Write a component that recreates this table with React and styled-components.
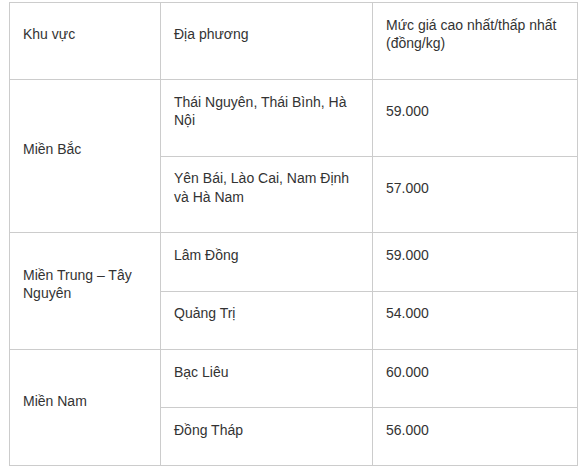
import React from "react";
import styled, { createGlobalStyle } from "styled-components";

const Global = createGlobalStyle`
  html, body { margin: 0; padding: 0; background: #fff; }
  body { font-family: "Liberation Sans", Arial, sans-serif; }
`;

const Table = styled.table`
  margin: 2px 0 0 9px;
  width: 568px;
  border-collapse: collapse;
  table-layout: fixed;
  font-size: 14px;
  line-height: 18.5px;
  color: #333;
`;

const Col = styled.col`
  width: ${(p) => p.$w}px;
`;

const Cell = styled.td`
  border: 1px solid #ccc;
  padding: 12.75px 13px 26px;
  vertical-align: middle;
  text-align: left;
  font-weight: normal;
`;

const rows = [
  { region: "Miền Bắc", span: 2, place: "Thái Nguyên, Thái Bình, Hà Nội", price: "59.000" },
  { place: "Yên Bái, Lào Cai, Nam Định và Hà Nam", price: "57.000" },
  { region: "Miền Trung – Tây Nguyên", span: 2, place: "Lâm Đồng", price: "59.000" },
  { place: "Quảng Trị", price: "54.000" },
  { region: "Miền Nam", span: 2, place: "Bạc Liêu", price: "60.000" },
  { place: "Đồng Tháp", price: "56.000" },
];

export default function App() {
  return (
    <>
      <Global />
      <Table>
        <colgroup>
          <Col $w={151} />
          <Col $w={212} />
          <Col $w={205} />
        </colgroup>
        <tbody>
          <tr>
            <Cell>Khu vực</Cell>
            <Cell>Địa phương</Cell>
            <Cell>Mức giá cao nhất/thấp nhất (đồng/kg)</Cell>
          </tr>
          {rows.map((r, i) => (
            <tr key={i}>
              {r.region && <Cell rowSpan={r.span}>{r.region}</Cell>}
              <Cell>{r.place}</Cell>
              <Cell>{r.price}</Cell>
            </tr>
          ))}
        </tbody>
      </Table>
    </>
  );
}
